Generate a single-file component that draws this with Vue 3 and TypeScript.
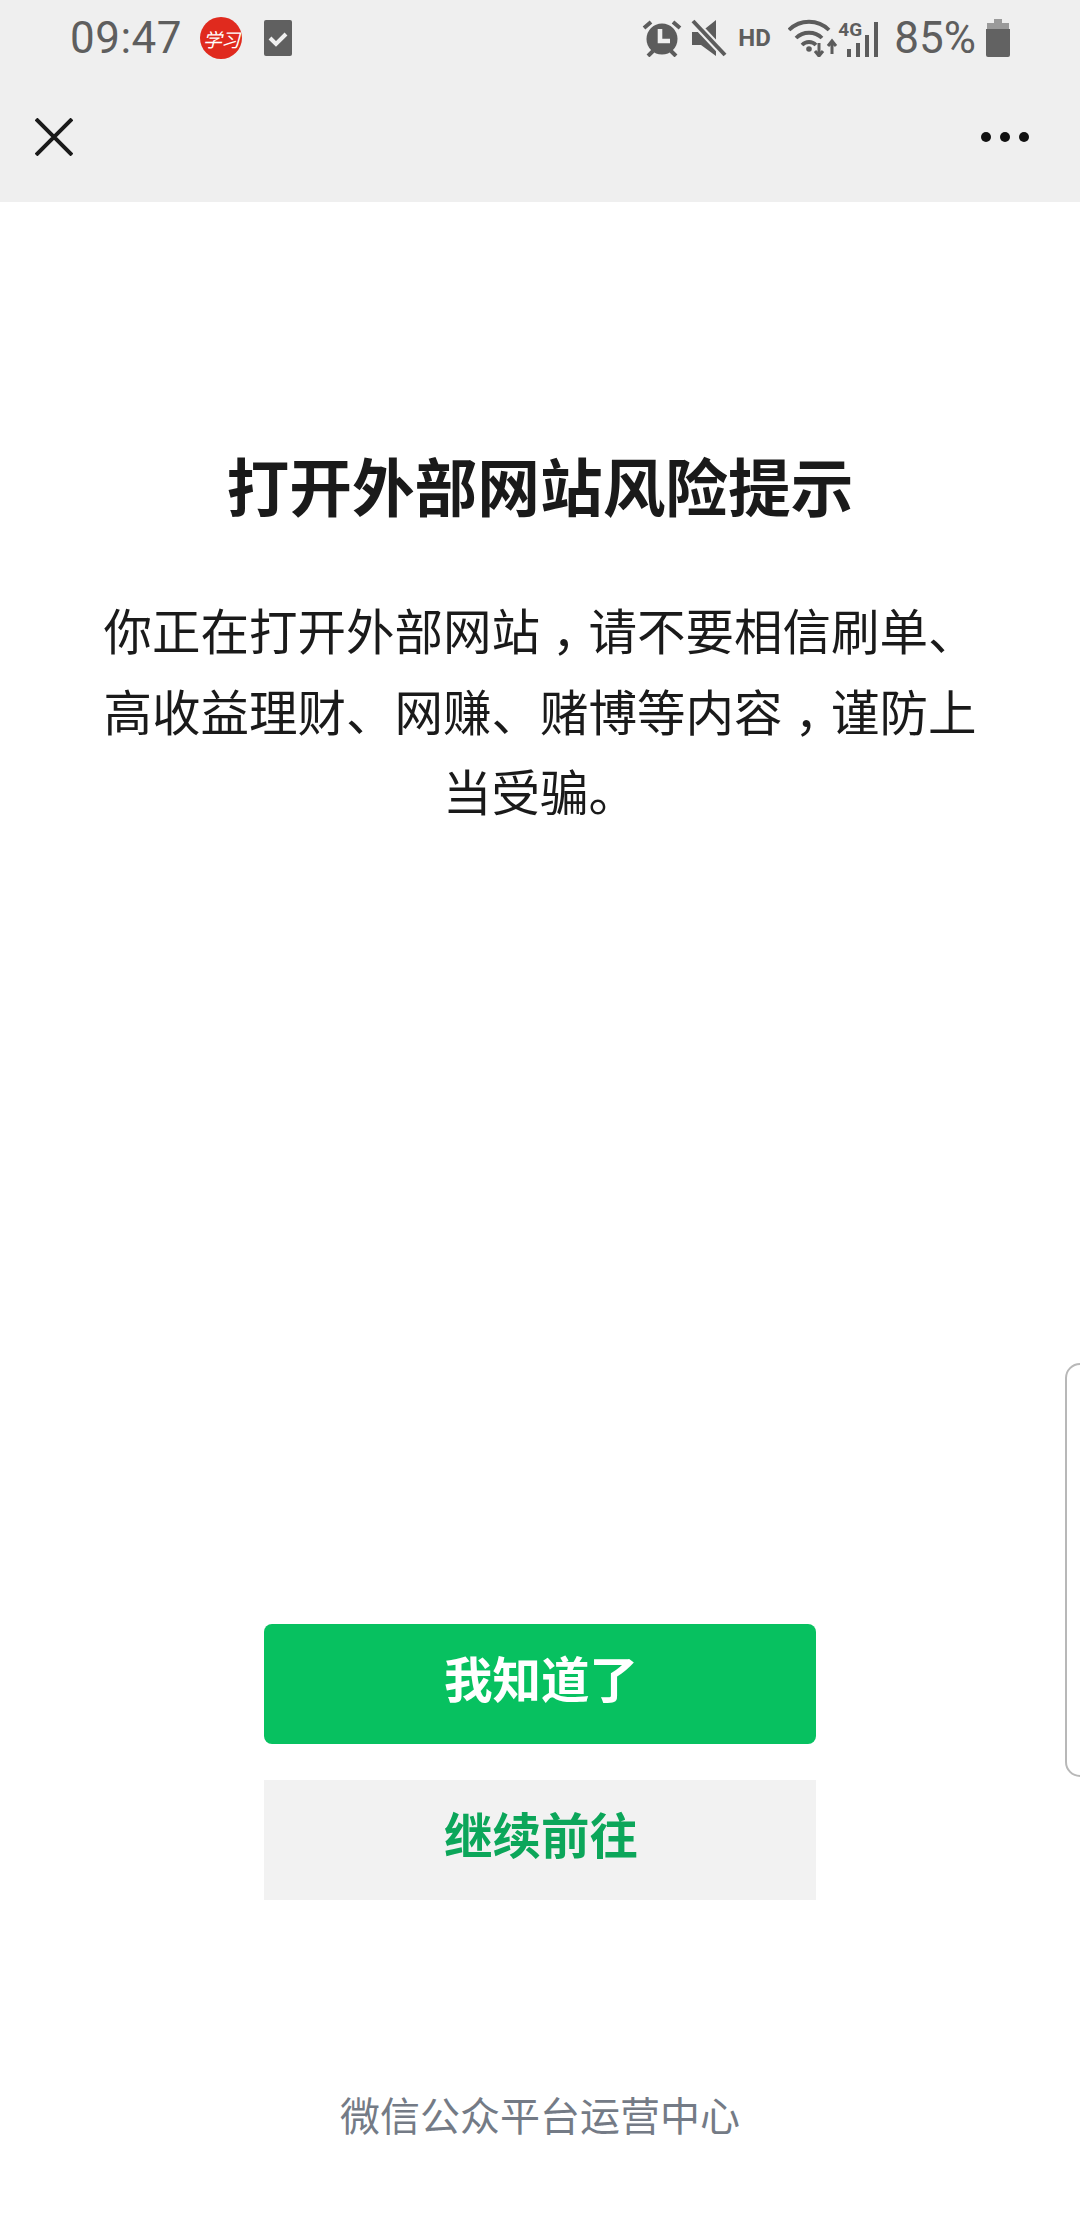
<script setup lang="ts">
interface Piece { text: string; comma: boolean }
const raw: string[] = ['你正在打开外部网站，请不要相信刷单、', '高收益理财、网赚、赌博等内容，谨防上', '当受骗。']
const lines: Piece[][] = raw.map((line) =>
  line.split(/(，)/).filter(Boolean).map((text) => ({ text, comma: text === '，' }))
)
</script>

<template>
  <div class="page">
    <header class="top">
      <div class="status">
        <div class="status-left">
          <span class="time">09:47</span>
          <span class="app-badge"><i class="scribble">学习</i></span>
          <svg class="check" viewBox="0 0 28 36" width="28" height="36">
            <rect width="28" height="36" rx="2" fill="#606060" />
            <path d="M6 18l6 6 10-10" fill="none" stroke="#f0f0f0" stroke-width="4" />
          </svg>
        </div>
        <div class="status-right">
          <svg class="ico alarm" viewBox="0 0 40 38" width="40" height="38">
            <circle cx="20" cy="20" r="15.5" fill="#5c5c5c" />
            <path d="M18 10v12h10" fill="none" stroke="#efefef" stroke-width="4.6" />
            <path d="M2 9l7-6M38 9l-7-6M6 37l5-5M34 37l-5-5" stroke="#5c5c5c" stroke-width="4" fill="none" />
          </svg>
          <svg class="ico mute" viewBox="0 0 36 38" width="36" height="38">
            <path d="M1 13h9L25 1v36L10 26H1z" fill="#5c5c5c" />
            <path d="M2 2l32 34" stroke="#efefef" stroke-width="8" />
            <path d="M2 2l32 34" stroke="#5c5c5c" stroke-width="4" />
          </svg>
          <span class="hd">HD</span>
          <svg class="ico wifi" viewBox="0 0 50 38" width="50" height="38">
            <path d="M1 11c11-11 29-11 40 0M8 19c7-7 19-7 26 0M14 26c4-4 10-4 14 0" fill="none" stroke="#5c5c5c" stroke-width="3.8" />
            <circle cx="21" cy="30" r="2.8" fill="#5c5c5c" />
            <path d="M31 24v13M27 32l4 5 4-5M44 35V22M40 27l4-5 4 5" fill="none" stroke="#5c5c5c" stroke-width="3" />
          </svg>
          <div class="signal">
            <span class="net">4G</span>
            <svg viewBox="0 0 42 36" width="42" height="36">
              <path d="M4 28h4v8H4zM13 22h4v14h-4zM22 14h4v22h-4zM31 1h4v35h-4z" fill="#5c5c5c" />
            </svg>
          </div>
          <span class="pct">85%</span>
          <svg class="ico battery" viewBox="0 0 24 38" width="24" height="38">
            <path d="M8 0h8v4H8z" fill="#9a9a9a" />
            <path d="M1 4h22v7H1z" fill="#9a9a9a" />
            <path d="M0 10h24v26a2 2 0 0 1-2 2H2a2 2 0 0 1-2-2z" fill="#626262" />
          </svg>
        </div>
      </div>
      <div class="nav">
        <svg class="close" viewBox="0 0 38 38" width="38" height="38">
          <path d="M1 1l36 36M37 1L1 37" fill="none" stroke="#1a1a1a" stroke-width="4" />
        </svg>
        <div class="more"><i></i><i></i><i></i></div>
      </div>
    </header>

    <main class="content">
      <h1 class="title">打开外部网站风险提示</h1>
      <p class="desc">
        <span v-for="(line, i) in lines" :key="i" class="line"><span v-for="(p, j) in line" :key="j" :class="{ comma: p.comma }">{{ p.text }}</span></span>
      </p>
    </main>

    <div class="actions">
      <button class="btn primary">我知道了</button>
      <button class="btn secondary">继续前往</button>
    </div>

    <footer class="foot">微信公众平台运营中心</footer>

    <div class="edge"></div>
  </div>
</template>

<style>
html, body { margin: 0; background: #fff; }
</style>

<style scoped>
.page {
  position: relative;
  width: 1080px;
  height: 2220px;
  overflow: hidden;
  display: flex;
  flex-direction: column;
  align-items: center;
  background: #fff;
  font-family: "Noto Sans CJK SC", "Noto Sans", sans-serif;
  color: #1a1a1a;
}
.top {
  width: 100%;
  height: 202px;
  background: #efefef;
  flex: none;
}
.status {
  height: 76px;
  display: flex;
  align-items: center;
  justify-content: space-between;
  padding: 0 70px 0 70px;
  color: #5e5e5e;
}
.status-left, .status-right { display: flex; align-items: center; }
.time {
  font: 400 44px/1 Roboto, sans-serif;
  letter-spacing: 0.5px;
}
.app-badge {
  width: 42px;
  height: 42px;
  margin-left: 18px;
  border-radius: 50%;
  background: #e02a1e;
  color: #fff;
  display: flex;
  align-items: center;
  justify-content: center;
  overflow: hidden;
}
.scribble {
  font: italic 400 19px/1 "Noto Sans CJK SC", sans-serif;
  letter-spacing: -1px;
  white-space: nowrap;
}
.check { margin-left: 22px; }
.ico { flex: none; }
.mute { margin-left: 9px; }
.hd {
  margin-left: 11px;
  width: 50px;
  font: 700 24px/1 Roboto, sans-serif;
}
.signal {
  position: relative;
  width: 42px;
  height: 38px;
  flex: none;
}
.signal svg { display: block; position: absolute; left: 5px; bottom: 0; }
.net {
  position: absolute;
  left: 0;
  top: 1px;
  font: 700 19px/1 Roboto, sans-serif;
}
.pct {
  margin-left: 14px;
  font: 400 44px/1 Roboto, sans-serif;
}
.battery { margin-left: 10px; }
.nav {
  height: 122px;
  display: flex;
  align-items: center;
  justify-content: space-between;
  padding: 0 51px 0 35px;
  box-sizing: border-box;
}
.close { display: block; }
.more { display: flex; gap: 9px; }
.more i { width: 10px; height: 10px; border-radius: 50%; background: #111; display: block; }
.content {
  width: 900px;
  flex: none;
  padding-top: 237px;
  text-align: center;
}
.title {
  margin: 0;
  font-size: 62.7px;
  font-weight: 700;
  line-height: 90px;
}
.desc {
  margin: 60px 0 0;
  font-size: 48.5px;
  line-height: 80.5px;
}
.line { display: block; white-space: nowrap; }
.comma {
  display: inline-block;
  font-feature-settings: "halt";
  padding: 0 12.125px;
}
.actions {
  position: absolute;
  top: 1624px;
  left: 264px;
  display: flex;
  flex-direction: column;
  gap: 36px;
}
.btn {
  width: 552px;
  height: 120px;
  border: 0;
  border-radius: 8px;
  font-family: inherit;
  font-size: 48.5px;
  font-weight: 700;
  padding: 0 0 14px 2px;
}
.primary { background: #07c160; color: #fff; }
.secondary { background: #f2f2f2; color: #0ca65a; border-radius: 0; }
.foot {
  position: absolute;
  top: 2086px;
  left: 0;
  right: 0;
  text-align: center;
  font-size: 40px;
  line-height: 56px;
  color: #747b86;
}
.edge {
  position: absolute;
  top: 1363px;
  left: 1065px;
  width: 30px;
  height: 414px;
  box-sizing: border-box;
  border: 2px solid #b8b8b8;
  border-radius: 16px;
  background: #fff;
}
</style>
